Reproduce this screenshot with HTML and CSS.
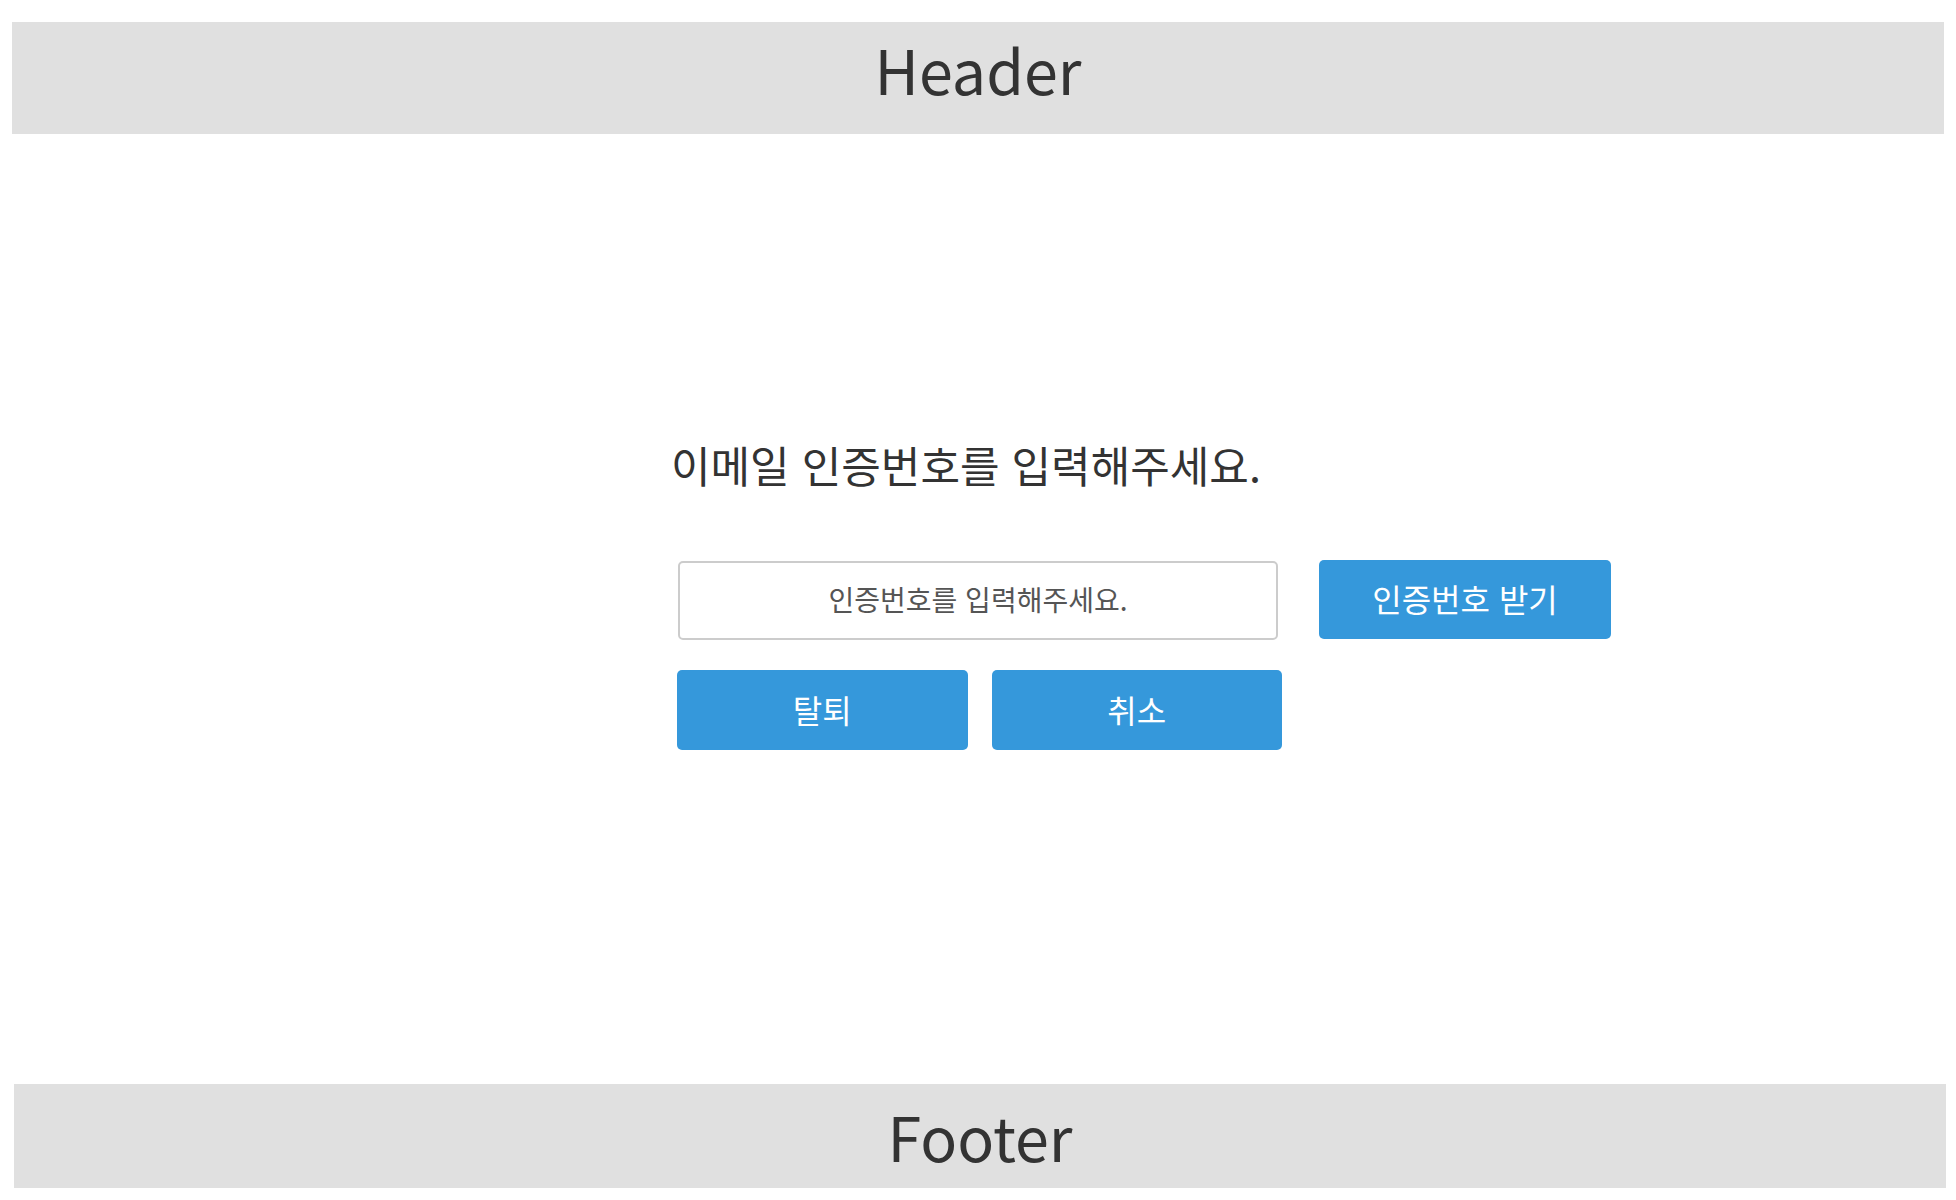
FILE: index.html
```html
<!DOCTYPE html>
<html lang="ko">
<head>
<meta charset="utf-8">
<title>이메일 인증</title>
<link rel="stylesheet" href="styles.css">
</head>
<body>
<div class="page">
  <header class="site-header">Header</header>
  <main class="content">
    <div class="verify">
      <h2 class="verify-title">이메일 인증번호를 입력해주세요.</h2>
      <div class="code-row">
        <input class="code-input" type="text" placeholder="인증번호를 입력해주세요.">
        <button class="btn btn-send" type="button">인증번호 받기</button>
      </div>
      <div class="action-row">
        <button class="btn btn-action" type="button">탈퇴</button>
        <button class="btn btn-action" type="button">취소</button>
      </div>
    </div>
  </main>
  <footer class="site-footer">Footer</footer>
</div>
</body>
</html>
```

FILE: styles.css
```css
* { box-sizing: border-box; }
html, body { margin: 0; padding: 0; background: #ffffff; }
body {
  font-family: "Noto Sans CJK KR", "Noto Sans", sans-serif;
  color: #333333;
}
.page {
  height: 1200px;
  display: flex;
  flex-direction: column;
}
.site-header {
  margin: 22px 12px 0 12px;
  height: 112px;
  background: #e0e0e0;
  font-size: 61px;
  line-height: 88px;
  padding-top: 3px;
  text-align: center;
}
.content {
  flex: 1;
  display: flex;
  justify-content: center;
}
.verify {
  width: 608px;
  padding-top: 299px;
}
.verify-title {
  margin: 0 0 0 -3px;
  font-size: 43px;
  font-weight: 400;
  line-height: 62px;
  text-align: left;
  white-space: nowrap;
  color: #333333;
}
.code-row {
  margin-top: 66px;
  margin-left: 4px;
  display: flex;
  gap: 41px;
}
.code-input {
  flex: 0 0 600px;
  width: 600px;
  height: 79px;
  border: 2px solid #cccccc;
  border-radius: 5px;
  font-family: inherit;
  font-size: 28px;
  text-align: center;
  color: #555555;
  outline: none;
  padding: 0 12px 3px 12px;
}
.code-input::placeholder { color: #555555; }
.btn {
  border: none;
  border-radius: 5px;
  background: #3598db;
  color: #ffffff;
  font-family: inherit;
  font-size: 32px;
  cursor: pointer;
  padding: 0 0 3px 0;
}
.btn-send {
  flex: 0 0 292px;
  height: 79px;
  margin-top: -1px;
}
.action-row {
  margin-top: 30px;
  margin-left: 3px;
  display: flex;
  gap: 24px;
}
.btn-action {
  width: 292px;
  height: 80px;
}
.site-footer {
  margin: 0 10px 12px 14px;
  height: 104px;
  background: #e0e0e0;
  font-size: 61px;
  line-height: 88px;
  padding-top: 8px;
  text-align: center;
}
```
